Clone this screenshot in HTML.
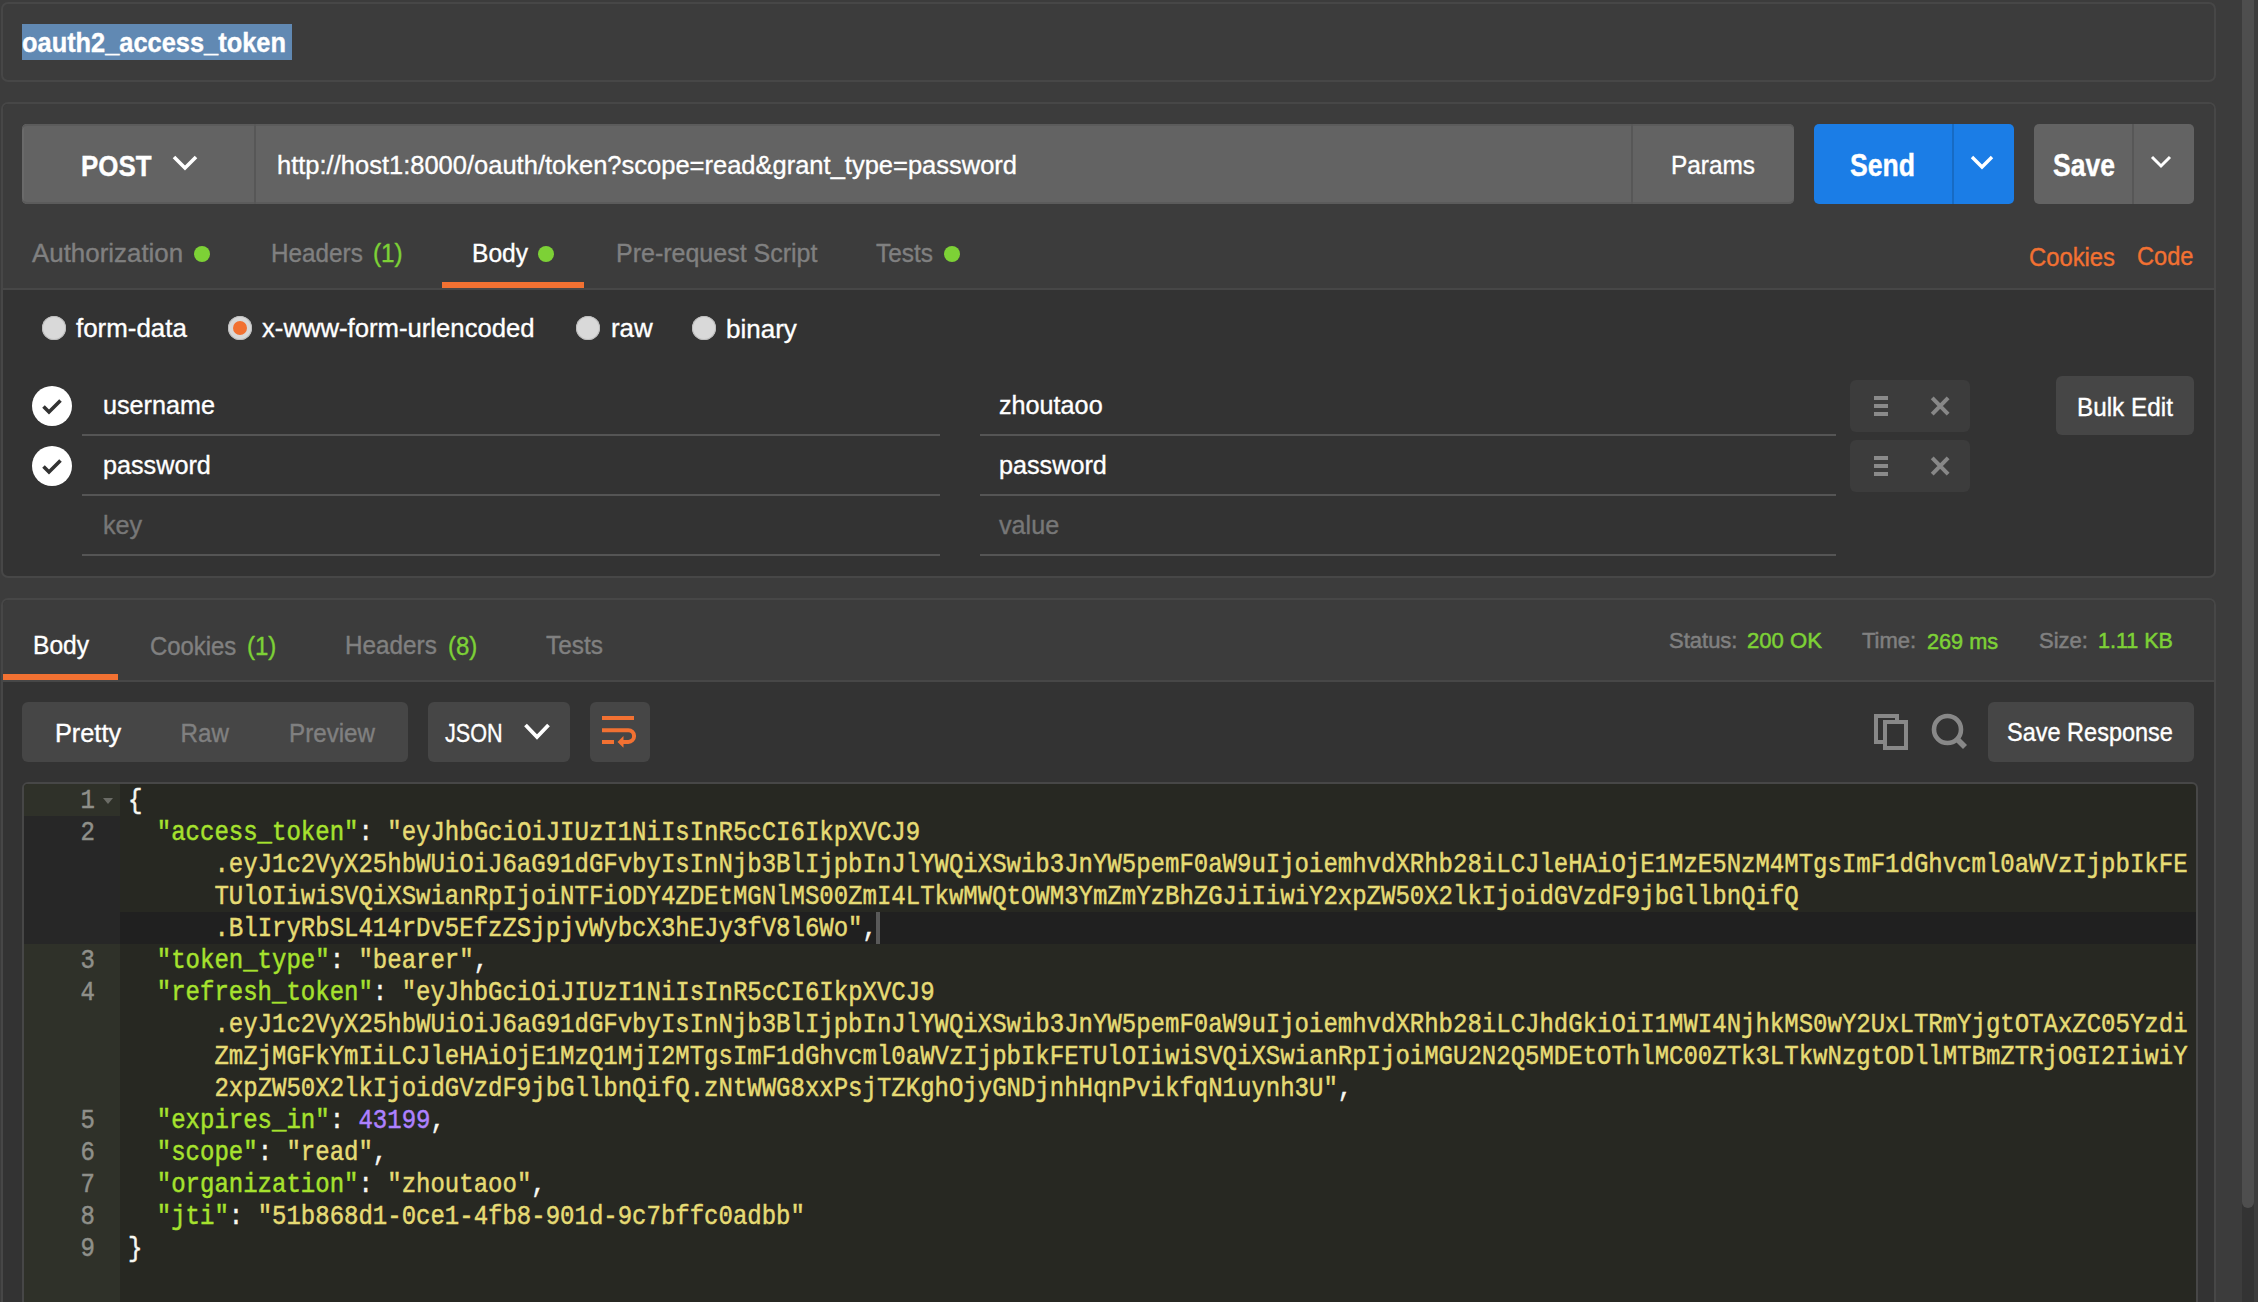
<!DOCTYPE html>
<html><head><meta charset="utf-8"><style>
html,body{margin:0;padding:0;}
body{width:2258px;height:1302px;overflow:hidden;position:relative;background:#3c3c3c;font-family:"Liberation Sans", sans-serif;}
.t{position:absolute;white-space:pre;line-height:1;-webkit-text-stroke:0.35px currentColor;}
.r{position:absolute;}
.cr{position:absolute;-webkit-text-stroke:0.5px currentColor;left:128px;height:32px;line-height:32px;white-space:pre;font-family:"Liberation Mono",monospace;font-size:28px;transform:scaleX(0.85714);transform-origin:0 0;padding-top:1px;}
.gn{position:absolute;-webkit-text-stroke:0.5px currentColor;transform:scaleX(0.857);transform-origin:100% 0;left:24px;width:71px;text-align:right;height:32px;line-height:32px;font-family:"Liberation Mono",monospace;font-size:28px;color:#8f908a;padding-top:1px;}
</style></head><body>
<div class="r" style="left:1px;top:2px;width:2215px;height:80px;background:#3c3c3c;border:2px solid #474747;box-sizing:border-box;border-radius:7px"></div>
<div class="r" style="left:22px;top:24px;width:270px;height:36px;background:#6189b3;"></div>
<div class="t" style="left:22px;top:30.5px;font-size:25.4px;color:#fff;font-weight:bold;transform:scale(1.0,1.1);transform-origin:0 21.50px;">oauth2_access_token</div>
<div class="r" style="left:1px;top:102px;width:2215px;height:476px;background:#333333;border:2px solid #474747;box-sizing:border-box;border-radius:7px"></div>
<div class="r" style="left:3px;top:104px;width:2211px;height:184px;background:#3c3c3c;border-radius:5px 5px 0 0"></div>
<div class="r" style="left:3px;top:288px;width:2211px;height:2px;background:#474747;"></div>
<div class="r" style="left:22px;top:124px;width:1772px;height:80px;background:#636363;border-radius:5px;box-shadow:inset 0 2px 0 #5b5b5b, inset 0 -2px 0 #5b5b5b, inset 2px 0 0 #6a6a6a"></div>
<div class="r" style="left:254px;top:124px;width:2px;height:80px;background:#575757;"></div>
<div class="r" style="left:1631px;top:124px;width:2px;height:80px;background:#575757;"></div>
<div class="t" style="left:81px;top:155.1px;font-size:25.9px;color:#fff;font-weight:bold;transform:scale(1.0,1.17);transform-origin:0 21.92px;">POST</div>
<svg class="r" style="left:172px;top:155px" width="26" height="18" viewBox="0 0 26 18"><path d="M2 2 L13 13 L24 2" fill="none" stroke="#fff" stroke-width="3.6"/></svg>
<div class="t" style="left:277px;top:152.9px;font-size:25.5px;color:#fff;font-weight:normal;transform:scale(1.0,1.0196078431372548);transform-origin:0 21.59px;">http://host1:8000/oauth/token?scope=read&amp;grant_type=password</div>
<div class="t" style="left:1671px;top:153.8px;font-size:24.4px;color:#fff;font-weight:normal;transform:scale(1.0,1.0655737704918034);transform-origin:0 20.65px;">Params</div>
<div class="r" style="left:1814px;top:124px;width:200px;height:80px;background:#1b7de6;border-radius:5px"></div>
<div class="r" style="left:1952px;top:124px;width:2px;height:80px;background:#176bc4;"></div>
<div class="t" style="left:1850px;top:153.5px;font-size:26.6px;color:#fff;font-weight:bold;transform:scale(1.0,1.17);transform-origin:0 22.52px;">Send</div>
<svg class="r" style="left:1970px;top:154px" width="24" height="18" viewBox="0 0 24 18"><path d="M2 3 L12 13 L22 3" fill="none" stroke="#fff" stroke-width="3.4"/></svg>
<div class="r" style="left:2034px;top:124px;width:160px;height:80px;background:#636363;border-radius:5px"></div>
<div class="r" style="left:2132px;top:124px;width:2px;height:80px;background:#575757;"></div>
<div class="t" style="left:2053px;top:153.6px;font-size:26.5px;color:#fff;font-weight:bold;transform:scale(1.0,1.17);transform-origin:0 22.43px;">Save</div>
<svg class="r" style="left:2150px;top:154px" width="22" height="16" viewBox="0 0 22 16"><path d="M2 3 L11 12 L20 3" fill="none" stroke="#fff" stroke-width="3"/></svg>
<div class="t" style="left:32px;top:240.6px;font-size:25.9px;color:#808080;font-weight:normal;transform:scale(1.0,1.0038610038610039);transform-origin:0 21.92px;">Authorization</div>
<div class="r" style="left:194px;top:246px;width:16px;height:16px;border-radius:50%;background:#7dd136"></div>
<div class="t" style="left:271px;top:241.9px;font-size:24.3px;color:#808080;font-weight:normal;transform:scale(1.0,1.0699588477366255);transform-origin:0 20.57px;">Headers</div>
<div class="t" style="left:373px;top:241.9px;font-size:24.3px;color:#7dd136;font-weight:normal;transform:scale(1.0,1.0699588477366255);transform-origin:0 20.57px;">(1)</div>
<div class="t" style="left:472px;top:241.7px;font-size:24.6px;color:#fff;font-weight:normal;transform:scale(1.0,1.056910569105691);transform-origin:0 20.82px;">Body</div>
<div class="r" style="left:538px;top:246px;width:16px;height:16px;border-radius:50%;background:#7dd136"></div>
<div class="t" style="left:616px;top:241.3px;font-size:25px;color:#808080;font-weight:normal;transform:scale(1.0,1.04);transform-origin:0 21.16px;">Pre-request Script</div>
<div class="t" style="left:876px;top:241.8px;font-size:24.4px;color:#808080;font-weight:normal;transform:scale(1.0,1.0655737704918034);transform-origin:0 20.65px;">Tests</div>
<div class="r" style="left:944px;top:246px;width:16px;height:16px;border-radius:50%;background:#7dd136"></div>
<div class="r" style="left:442px;top:282px;width:142px;height:6px;background:#f27132;"></div>
<div class="t" style="left:2029px;top:245.9px;font-size:23.8px;color:#f27132;font-weight:normal;transform:scale(1.0,1.0924369747899159);transform-origin:0 20.15px;">Cookies</div>
<div class="t" style="left:2137px;top:246.0px;font-size:23.6px;color:#f27132;font-weight:normal;transform:scale(1.0,1.1016949152542372);transform-origin:0 19.98px;">Code</div>
<div class="r" style="left:42px;top:316px;width:24px;height:24px;border-radius:50%;background:#d9d9d9;box-shadow:inset 0 0 0 1px #bdbdbd"></div>
<div class="t" style="left:76px;top:315.6px;font-size:25.9px;color:#fff;font-weight:normal;transform:scale(1.0,1.0038610038610039);transform-origin:0 21.92px;">form-data</div>
<div class="r" style="left:228px;top:316px;width:24px;height:24px;border-radius:50%;background:#d9d9d9;box-shadow:inset 0 0 0 1px #bdbdbd"></div><div class="r" style="left:233px;top:321px;width:14px;height:14px;border-radius:50%;background:#f27132"></div>
<div class="t" style="left:262px;top:315.7px;font-size:25.7px;color:#fff;font-weight:normal;transform:scale(1.0,1.0116731517509727);transform-origin:0 21.76px;">x-www-form-urlencoded</div>
<div class="r" style="left:576px;top:316px;width:24px;height:24px;border-radius:50%;background:#d9d9d9;box-shadow:inset 0 0 0 1px #bdbdbd"></div>
<div class="t" style="left:611px;top:315.6px;font-size:25.9px;color:#fff;font-weight:normal;transform:scale(1.0,1.0038610038610039);transform-origin:0 21.92px;">raw</div>
<div class="r" style="left:692px;top:316px;width:24px;height:24px;border-radius:50%;background:#d9d9d9;box-shadow:inset 0 0 0 1px #bdbdbd"></div>
<div class="t" style="left:726px;top:315.5px;font-size:26px;color:#fff;font-weight:normal;">binary</div>
<div class="r" style="left:82px;top:434px;width:858px;height:2px;background:#555555;"></div>
<div class="r" style="left:980px;top:434px;width:856px;height:2px;background:#555555;"></div>
<div class="t" style="left:103px;top:392.7px;font-size:25.2px;color:#ffffff;font-weight:normal;transform:scale(1.0,1.0317460317460319);transform-origin:0 21.33px;">username</div>
<div class="t" style="left:999px;top:392.7px;font-size:25.2px;color:#ffffff;font-weight:normal;transform:scale(1.0,1.0317460317460319);transform-origin:0 21.33px;">zhoutaoo</div>
<div class="r" style="left:32px;top:386px;width:40px;height:40px;border-radius:50%;background:#fff"></div><svg class="r" style="left:41px;top:396px" width="22" height="20" viewBox="0 0 22 20"><path d="M2.5 10.5 L8 16 L19.5 4.5" fill="none" stroke="#333" stroke-width="3.6"/></svg>
<div class="r" style="left:1850px;top:380px;width:120px;height:52px;background:#3c3c3c;border-radius:6px"></div>
<div class="r" style="left:1874px;top:396px;width:14px;height:4px;background:#8a8a8a;"></div>
<div class="r" style="left:1874px;top:404px;width:14px;height:4px;background:#8a8a8a;"></div>
<div class="r" style="left:1874px;top:412px;width:14px;height:4px;background:#8a8a8a;"></div>
<svg class="r" style="left:1929px;top:394px" width="22" height="22" viewBox="0 0 22 22"><path d="M3.2 3.9 L19.1 20.1 M19.1 3.9 L3.2 20.1" stroke="#878787" stroke-width="4"/></svg>
<div class="r" style="left:82px;top:494px;width:858px;height:2px;background:#555555;"></div>
<div class="r" style="left:980px;top:494px;width:856px;height:2px;background:#555555;"></div>
<div class="t" style="left:103px;top:452.7px;font-size:25.2px;color:#ffffff;font-weight:normal;transform:scale(1.0,1.0317460317460319);transform-origin:0 21.33px;">password</div>
<div class="t" style="left:999px;top:452.7px;font-size:25.2px;color:#ffffff;font-weight:normal;transform:scale(1.0,1.0317460317460319);transform-origin:0 21.33px;">password</div>
<div class="r" style="left:32px;top:446px;width:40px;height:40px;border-radius:50%;background:#fff"></div><svg class="r" style="left:41px;top:456px" width="22" height="20" viewBox="0 0 22 20"><path d="M2.5 10.5 L8 16 L19.5 4.5" fill="none" stroke="#333" stroke-width="3.6"/></svg>
<div class="r" style="left:1850px;top:440px;width:120px;height:52px;background:#3c3c3c;border-radius:6px"></div>
<div class="r" style="left:1874px;top:456px;width:14px;height:4px;background:#8a8a8a;"></div>
<div class="r" style="left:1874px;top:464px;width:14px;height:4px;background:#8a8a8a;"></div>
<div class="r" style="left:1874px;top:472px;width:14px;height:4px;background:#8a8a8a;"></div>
<svg class="r" style="left:1929px;top:454px" width="22" height="22" viewBox="0 0 22 22"><path d="M3.2 3.9 L19.1 20.1 M19.1 3.9 L3.2 20.1" stroke="#878787" stroke-width="4"/></svg>
<div class="r" style="left:82px;top:554px;width:858px;height:2px;background:#555555;"></div>
<div class="r" style="left:980px;top:554px;width:856px;height:2px;background:#555555;"></div>
<div class="t" style="left:103px;top:512.7px;font-size:25.2px;color:#777777;font-weight:normal;transform:scale(1.0,1.0317460317460319);transform-origin:0 21.33px;">key</div>
<div class="t" style="left:999px;top:512.7px;font-size:25.2px;color:#777777;font-weight:normal;transform:scale(1.0,1.0317460317460319);transform-origin:0 21.33px;">value</div>
<div class="r" style="left:2056px;top:376px;width:138px;height:59px;background:#464646;border-radius:6px"></div>
<div class="t" style="left:2077px;top:395.9px;font-size:24.3px;color:#fff;font-weight:normal;transform:scale(1.0,1.0699588477366255);transform-origin:0 20.57px;">Bulk Edit</div>
<div class="r" style="left:1px;top:598px;width:2215px;height:802px;background:#333333;border:2px solid #474747;box-sizing:border-box;border-radius:7px"></div>
<div class="r" style="left:3px;top:600px;width:2211px;height:80px;background:#3c3c3c;border-radius:5px 5px 0 0"></div>
<div class="r" style="left:3px;top:680px;width:2211px;height:2px;background:#474747;"></div>
<div class="t" style="left:33px;top:634.2px;font-size:24.6px;color:#fff;font-weight:normal;transform:scale(1.0,1.056910569105691);transform-origin:0 20.82px;">Body</div>
<div class="t" style="left:150px;top:634.8px;font-size:23.9px;color:#808080;font-weight:normal;transform:scale(1.0,1.087866108786611);transform-origin:0 20.23px;">Cookies</div>
<div class="t" style="left:247px;top:634.7px;font-size:24px;color:#7dd136;font-weight:normal;transform:scale(1.0,1.0833333333333333);transform-origin:0 20.32px;">(1)</div>
<div class="t" style="left:345px;top:634.4px;font-size:24.3px;color:#808080;font-weight:normal;transform:scale(1.0,1.0699588477366255);transform-origin:0 20.57px;">Headers</div>
<div class="t" style="left:448px;top:634.7px;font-size:24px;color:#7dd136;font-weight:normal;transform:scale(1.0,1.0833333333333333);transform-origin:0 20.32px;">(8)</div>
<div class="t" style="left:546px;top:634.3px;font-size:24.4px;color:#808080;font-weight:normal;transform:scale(1.0,1.0655737704918034);transform-origin:0 20.65px;">Tests</div>
<div class="r" style="left:3px;top:674px;width:115px;height:6px;background:#f27132;"></div>
<div class="t" style="left:1669px;top:630.4px;font-size:22px;color:#808080;font-weight:normal;-webkit-text-stroke:0.5px currentColor">Status:</div>
<div class="t" style="left:1747px;top:630.3px;font-size:22.1px;color:#7dd136;font-weight:normal;-webkit-text-stroke:0.5px currentColor">200 OK</div>
<div class="t" style="left:1862px;top:630.4px;font-size:22px;color:#808080;font-weight:normal;-webkit-text-stroke:0.5px currentColor">Time:</div>
<div class="t" style="left:1927px;top:630.6px;font-size:21.7px;color:#7dd136;font-weight:normal;-webkit-text-stroke:0.5px currentColor">269 ms</div>
<div class="t" style="left:2039px;top:630.4px;font-size:22px;color:#808080;font-weight:normal;-webkit-text-stroke:0.5px currentColor">Size:</div>
<div class="t" style="left:2098px;top:630.8px;font-size:21.5px;color:#7dd136;font-weight:normal;-webkit-text-stroke:0.5px currentColor">1.11 KB</div>
<div class="r" style="left:22px;top:702px;width:386px;height:60px;background:#464646;border-radius:6px"></div>
<div class="t" style="left:55px;top:720.6px;font-size:25.3px;color:#fff;font-weight:normal;transform:scale(1.0,1.0276679841897234);transform-origin:0 21.42px;">Pretty</div>
<div class="t" style="left:180.5px;top:721.5px;font-size:24.2px;color:#808080;font-weight:normal;transform:scale(1.0,1.0743801652892562);transform-origin:0 20.49px;">Raw</div>
<div class="t" style="left:289px;top:721.5px;font-size:24.2px;color:#808080;font-weight:normal;transform:scale(1.0,1.0743801652892562);transform-origin:0 20.49px;">Preview</div>
<div class="r" style="left:428px;top:702px;width:142px;height:60px;background:#464646;border-radius:6px"></div>
<div class="t" style="left:445px;top:720.0px;font-size:26px;color:#fff;font-weight:normal;transform:scale(0.83,1.0);transform-origin:0 22.01px;">JSON</div>
<svg class="r" style="left:523px;top:722px" width="28" height="20" viewBox="0 0 28 20"><path d="M2.5 3 L14 15 L25.5 3" fill="none" stroke="#fff" stroke-width="3.8"/></svg>
<div class="r" style="left:590px;top:702px;width:60px;height:60px;background:#464646;border-radius:6px"></div>
<svg class="r" style="left:600px;top:712px" width="40" height="40" viewBox="0 0 40 40"><g fill="none" stroke="#f27132" stroke-width="4"><path d="M2 6 H34"/><path d="M2 18.3 H28.3 A5.8 5.8 0 0 1 28.3 29.9 H22"/><path d="M2 30 H14"/></g><path d="M17.5 30 L23.5 24 L23.5 35.8 Z" fill="#f27132"/></svg>
<svg class="r" style="left:1872px;top:712px" width="40" height="40" viewBox="0 0 40 40"><rect x="4" y="4" width="21" height="26" fill="none" stroke="#888" stroke-width="4"/><rect x="13" y="10" width="21" height="26" fill="#333" stroke="#888" stroke-width="4"/></svg>
<svg class="r" style="left:1928px;top:710px" width="44" height="44" viewBox="0 0 44 44"><circle cx="19.5" cy="19.5" r="13.5" fill="none" stroke="#888" stroke-width="4.6"/><path d="M29 29 L37 37" stroke="#888" stroke-width="5.6"/></svg>
<div class="r" style="left:1988px;top:702px;width:206px;height:60px;background:#464646;border-radius:6px"></div>
<div class="t" style="left:2007px;top:722.1px;font-size:23.5px;color:#fff;font-weight:normal;transform:scale(1.0,1.1063829787234043);transform-origin:0 19.89px;">Save Response</div>
<div class="r" style="left:22px;top:782px;width:2176px;height:618px;background:#272822;border:2px solid #474747;box-sizing:border-box;border-radius:6px 6px 0 0"></div>
<div class="r" style="left:24px;top:784px;width:96px;height:616px;background:#2f3129;border-top-left-radius:4px"></div>
<div class="r" style="left:24px;top:816px;width:96px;height:128px;background:#272727;"></div>
<div class="r" style="left:120px;top:912px;width:2076px;height:32px;background:#202020;"></div>
<div class="gn" style="top:784px">1</div>
<div class="gn" style="top:816px">2</div>
<div class="gn" style="top:944px">3</div>
<div class="gn" style="top:976px">4</div>
<div class="gn" style="top:1104px">5</div>
<div class="gn" style="top:1136px">6</div>
<div class="gn" style="top:1168px">7</div>
<div class="gn" style="top:1200px">8</div>
<div class="gn" style="top:1232px">9</div>
<svg class="r" style="left:102px;top:797px" width="12" height="8" viewBox="0 0 12 8"><path d="M1 1 H11 L6 7 Z" fill="#6b6c66"/></svg>
<div class="cr" style="top:784px"><span style="color:#f8f8f2">{</span></div>
<div class="cr" style="top:816px"><span style="color:#f8f8f2">  </span><span style="color:#a6e22e">&quot;access_token&quot;</span><span style="color:#f8f8f2">: </span><span style="color:#e6db74">&quot;eyJhbGciOiJIUzI1NiIsInR5cCI6IkpXVCJ9</span></div>
<div class="cr" style="top:848px"><span style="color:#f8f8f2">      </span><span style="color:#e6db74">.eyJ1c2VyX25hbWUiOiJ6aG91dGFvbyIsInNjb3BlIjpbInJlYWQiXSwib3JnYW5pemF0aW9uIjoiemhvdXRhb28iLCJleHAiOjE1MzE5NzM4MTgsImF1dGhvcml0aWVzIjpbIkFE</span></div>
<div class="cr" style="top:880px"><span style="color:#f8f8f2">      </span><span style="color:#e6db74">TUlOIiwiSVQiXSwianRpIjoiNTFiODY4ZDEtMGNlMS00ZmI4LTkwMWQtOWM3YmZmYzBhZGJiIiwiY2xpZW50X2lkIjoidGVzdF9jbGllbnQifQ</span></div>
<div class="cr" style="top:912px"><span style="color:#f8f8f2">      </span><span style="color:#e6db74">.BlIryRbSL414rDv5EfzZSjpjvWybcX3hEJy3fV8l6Wo&quot;</span><span style="color:#f8f8f2">,</span></div>
<div class="cr" style="top:944px"><span style="color:#f8f8f2">  </span><span style="color:#a6e22e">&quot;token_type&quot;</span><span style="color:#f8f8f2">: </span><span style="color:#e6db74">&quot;bearer&quot;</span><span style="color:#f8f8f2">,</span></div>
<div class="cr" style="top:976px"><span style="color:#f8f8f2">  </span><span style="color:#a6e22e">&quot;refresh_token&quot;</span><span style="color:#f8f8f2">: </span><span style="color:#e6db74">&quot;eyJhbGciOiJIUzI1NiIsInR5cCI6IkpXVCJ9</span></div>
<div class="cr" style="top:1008px"><span style="color:#f8f8f2">      </span><span style="color:#e6db74">.eyJ1c2VyX25hbWUiOiJ6aG91dGFvbyIsInNjb3BlIjpbInJlYWQiXSwib3JnYW5pemF0aW9uIjoiemhvdXRhb28iLCJhdGkiOiI1MWI4NjhkMS0wY2UxLTRmYjgtOTAxZC05Yzdi</span></div>
<div class="cr" style="top:1040px"><span style="color:#f8f8f2">      </span><span style="color:#e6db74">ZmZjMGFkYmIiLCJleHAiOjE1MzQ1MjI2MTgsImF1dGhvcml0aWVzIjpbIkFETUlOIiwiSVQiXSwianRpIjoiMGU2N2Q5MDEtOThlMC00ZTk3LTkwNzgtODllMTBmZTRjOGI2IiwiY</span></div>
<div class="cr" style="top:1072px"><span style="color:#f8f8f2">      </span><span style="color:#e6db74">2xpZW50X2lkIjoidGVzdF9jbGllbnQifQ.zNtWWG8xxPsjTZKghOjyGNDjnhHqnPvikfqN1uynh3U&quot;</span><span style="color:#f8f8f2">,</span></div>
<div class="cr" style="top:1104px"><span style="color:#f8f8f2">  </span><span style="color:#a6e22e">&quot;expires_in&quot;</span><span style="color:#f8f8f2">: </span><span style="color:#ae81ff">43199</span><span style="color:#f8f8f2">,</span></div>
<div class="cr" style="top:1136px"><span style="color:#f8f8f2">  </span><span style="color:#a6e22e">&quot;scope&quot;</span><span style="color:#f8f8f2">: </span><span style="color:#e6db74">&quot;read&quot;</span><span style="color:#f8f8f2">,</span></div>
<div class="cr" style="top:1168px"><span style="color:#f8f8f2">  </span><span style="color:#a6e22e">&quot;organization&quot;</span><span style="color:#f8f8f2">: </span><span style="color:#e6db74">&quot;zhoutaoo&quot;</span><span style="color:#f8f8f2">,</span></div>
<div class="cr" style="top:1200px"><span style="color:#f8f8f2">  </span><span style="color:#a6e22e">&quot;jti&quot;</span><span style="color:#f8f8f2">: </span><span style="color:#e6db74">&quot;51b868d1-0ce1-4fb8-901d-9c7bffc0adbb&quot;</span></div>
<div class="cr" style="top:1232px"><span style="color:#f8f8f2">}</span></div>
<div class="r" style="left:876px;top:912px;width:4px;height:32px;background:#595959;"></div>
<div class="r" style="left:2242px;top:0px;width:12px;height:1302px;background:#333333;"></div>
<div class="r" style="left:2242px;top:0px;width:12px;height:1208px;background:#4e4e4e;border-radius:0 0 6px 6px"></div>
</body></html>
